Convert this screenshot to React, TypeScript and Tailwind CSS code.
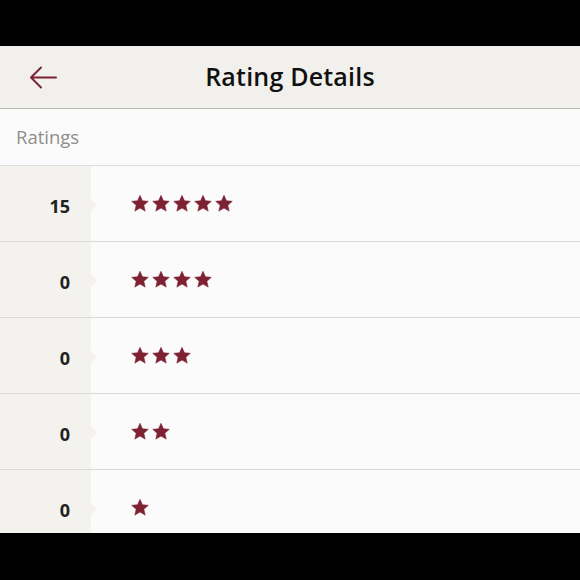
const rows = [
  { count: 15, stars: 5 },
  { count: 0, stars: 4 },
  { count: 0, stars: 3 },
  { count: 0, stars: 2 },
  { count: 0, stars: 1 },
]

function Star() {
  return (
    <svg width="18" height="17" viewBox="0 0 24 23" className="shrink-0">
      <path
        d="M12 0.5l3.3 7.3 7.9 0.8-6 5.3 1.8 7.9L12 17.7l-7 4.1 1.8-7.9-6-5.3 7.9-0.8z"
        fill="#7e2233"
        stroke="#7e2233"
        strokeWidth="0.8"
        strokeLinejoin="round"
      />
    </svg>
  )
}

function BackArrow() {
  return (
    <svg width="30" height="24" viewBox="0 0 30 24" className="absolute left-[28px] top-[19px]">
      <path d="M3 12.5h25M13 2.5L3 12.5l10 10" fill="none" stroke="#7a2533" strokeWidth="2" strokeLinecap="round" strokeLinejoin="round" />
    </svg>
  )
}

export default function App() {
  return (
    <div
      className="w-[580px] h-[580px] bg-black pt-[46px]"
      style={{ fontFamily: '"Open Sans", "Noto Sans", sans-serif' }}
    >
      <div className="h-[487px] overflow-hidden bg-[#fbfbfb]">
        {/* Header */}
        <div className="relative h-[63px] flex items-center justify-center bg-[#f1f0ec] border-b border-[#bab8b2]">
          <BackArrow />
          <h1 className="text-[25px] font-semibold text-[#111] tracking-[0.2px]">Rating Details</h1>
        </div>

        <div className="h-[57px] flex items-center px-4 border-b border-[#dedcd9] text-[18.5px] text-[#8f8d89]">
          Ratings
        </div>

        {rows.map((row, i) => (
          <div key={i} className="flex h-[76px] border-b border-[#dcdad6]">
            <div className="relative w-[91px] bg-[#f3f2ef] flex items-center justify-end pr-[21px] pt-[6px]">
              <span className="text-[18px] font-bold text-[#222]">{row.count}</span>
              <span className="absolute right-[-6px] top-[33px] w-0 h-0 border-y-[6px] border-y-transparent border-l-[6px] border-l-[#f3f2ef]" />
            </div>
            <div className="flex items-center gap-[3px] pl-[40px]">
              {Array.from({ length: row.stars }).map((_, j) => (
                <Star key={j} />
              ))}
            </div>
          </div>
        ))}
      </div>
    </div>
  )
}
